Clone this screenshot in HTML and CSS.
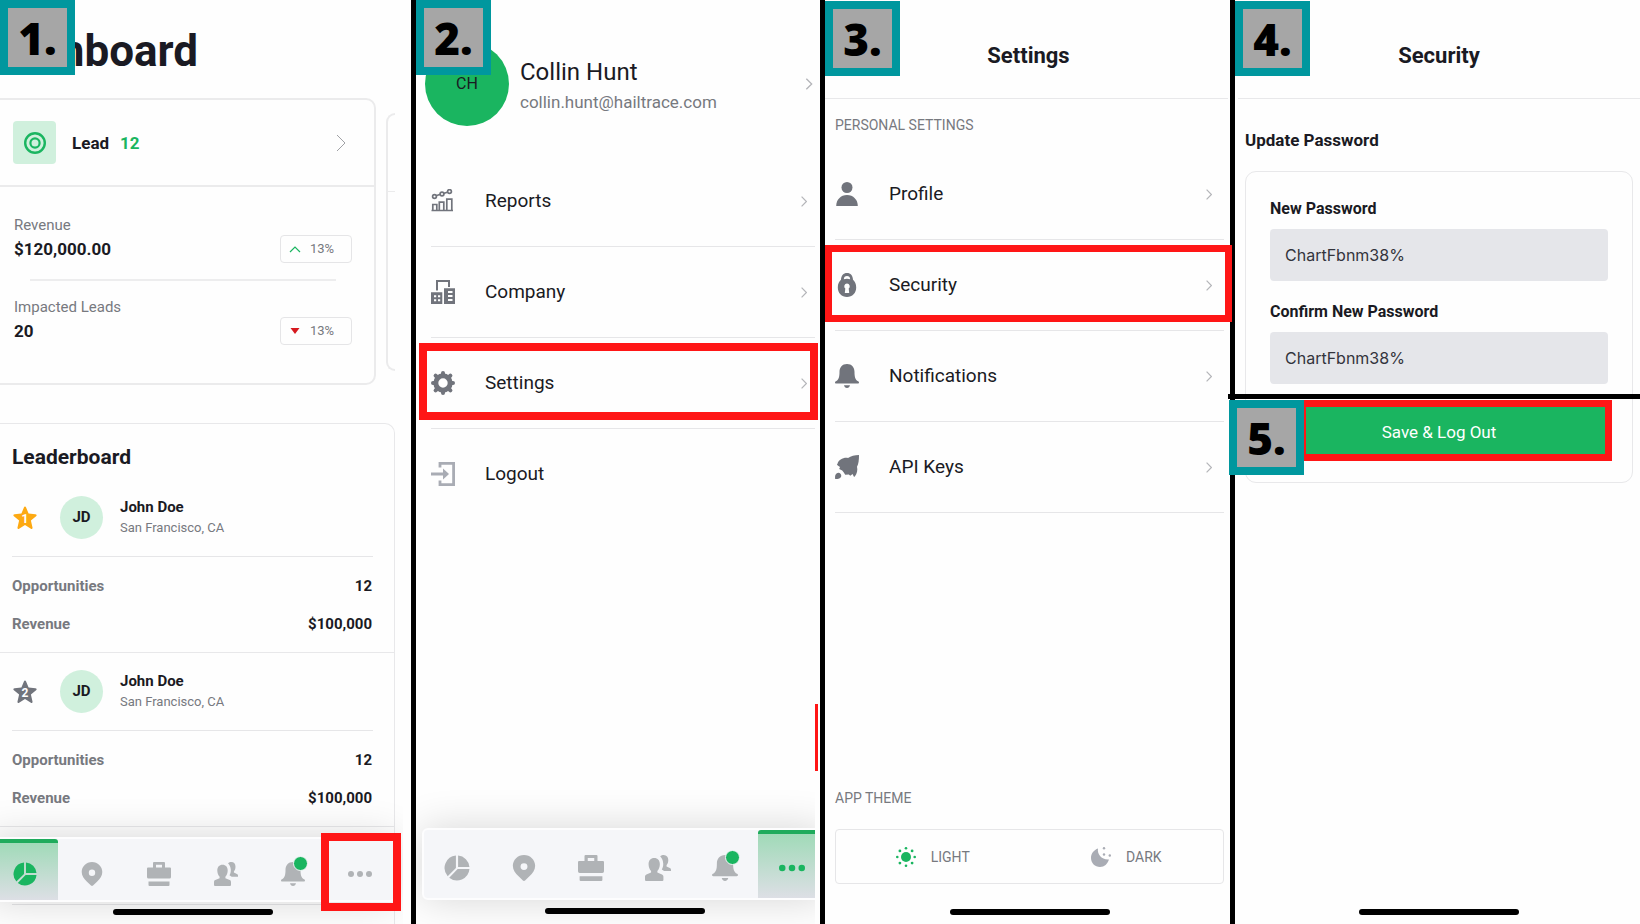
FILE: index.html
```html
<!DOCTYPE html>
<html lang="en">
<head>
    <meta charset="UTF-8">
    <meta name="viewport" content="width=device-width, initial-scale=1.0">
    <title>Change your password</title>
    <link rel="stylesheet" href="styles.css">
</head>
<body>

<!-- Shared icons -->
<svg class="sprite" aria-hidden="true">
    <symbol id="chevron" viewBox="0 0 10 18"><path d="M1 1l8 8-8 8" fill="none" stroke="currentColor"/></symbol>
    <symbol id="pie" viewBox="0 0 24 24">
        <path d="M13 11V.5A11.5 11.5 0 0 1 23.5 11ZM12.6 13H23.5A11.5 11.5 0 0 1 4.8 20.9ZM11 .5V12L3.4 19.5A11.5 11.5 0 0 1 11 .5Z"/>
    </symbol>
    <symbol id="pin" viewBox="0 0 24 24">
        <path fill-rule="evenodd" d="M12 0C6.300 0 1.700 4.500 1.700 10c0 3.900 2.300 7 5.300 9.700l4 3.800c.6.600 1.400.6 2 0l4-3.800c3-2.700 5.300-5.800 5.300-9.700C22.300 4.500 17.700 0 12 0Zm0 7.500a3.200 3.200 0 1 1 0 6.400 3.200 3.200 0 0 1 0-6.400Z"/>
    </symbol>
    <symbol id="case" viewBox="0 0 24 24">
        <path fill-rule="evenodd" d="M7 0h10q1 0 1 1v4.500h5q1 0 1 1V15q0 1.500-1.500 1.500h-21Q0 16.500 0 15V6.500q0-1 1-1h5V1q0-1 1-1Zm2 2.800v2.700h6V2.800ZM1.500 19.500h21V23q0 1-1 1h-19q-1 0-1-1Z"/>
    </symbol>
    <symbol id="people" viewBox="0 0 24 24">
        <path d="M8.500 2.800c-3.300 0-5.200 2.300-5.200 5.700 0 2.600.9 4.800 2.300 6.200v1.500L1.300 18C.4 18.400 0 19.200 0 20.200V23q0 1 1 1h15q1 0 1-1v-2.800c0-1-.4-1.800-1.300-2.200l-4.300-1.800v-1.500c1.400-1.400 2.300-3.600 2.300-6.200 0-3.400-1.900-5.700-5.200-5.700Z"/>
        <path d="M14 1.200C15 .3 16.100 0 17.300 0c2.700 0 4.200 2 4.200 4.700 0 2-.6 3.600-1.600 4.700v1.200l3 1.300c.8.300 1.100.9 1.100 1.600v1.200h-6.300c-1.100-.7-2-1.200-2.200-1.400 1-1.700 1.500-3.600 1.300-5.700-.2-2.700-1.300-4.800-2.800-6.400Z"/>
    </symbol>
    <symbol id="bell" viewBox="0 0 24 24">
        <path d="M12 0C7.200 0 4.500 3.400 4.500 8c0 5-.8 7.800-3.600 9.300-.6.300-.9.700-.9 1.200 0 .6.400 1 1.200 1h21.600c.8 0 1.200-.4 1.200-1 0-.5-.3-.9-.9-1.200C20.300 15.800 19.500 13 19.500 8c0-4.600-2.700-8-7.500-8ZM9 21.300h6c-.3 1.600-1.400 2.700-3 2.700s-2.700-1.100-3-2.700Z"/>
    </symbol>
    <symbol id="dots" viewBox="0 0 24 24"><circle cx="3" cy="12" r="3"/><circle cx="12" cy="12" r="3"/><circle cx="21" cy="12" r="3"/></symbol>
    <symbol id="star" viewBox="0 0 24 24">
        <path d="M12 .6q.7 0 1.100 1l2.500 6 6.800.6q1 .1 1.200.7.200.7-.5 1.300l-5.200 4.300 1.600 6.900q.2.900-.3 1.300t-1.300 0L12 19l-5.900 3.700q-.8.500-1.300 0t-.3-1.300l1.600-6.900L.9 10.200Q.2 9.600.4 8.900q.2-.6 1.200-.7l6.800-.6 2.500-6q.4-1 1.100-1Z"/>
    </symbol>
</svg>

<main class="steps">

    <!-- 1. Dashboard -->
    <section class="panel dashboard">
        <span class="step">1.</span>
        <h1>Dashboard</h1>

        <div class="carousel">
            <article class="card">
                <header class="card-head">
                    <span class="target">
                        <svg viewBox="0 0 22 22" fill="none" stroke="currentColor"><circle cx="11" cy="11" r="9.800" stroke-width="2.400"/><circle cx="11" cy="11" r="4.600" stroke-width="2.200"/></svg>
                    </span>
                    <strong>Lead</strong>
                    <strong class="count">12</strong>
                    <svg class="chevron chevron-lg"><use href="#chevron"/></svg>
                </header>
                <div class="card-body">
                    <div class="metric">
                        <p><span>Revenue</span><strong>$120,000.00</strong></p>
                        <span class="change"><svg class="up" viewBox="0 0 12 12"><path d="M1 9l5-5 5 5" fill="none" stroke="currentColor" stroke-width="1.200"/></svg>13%</span>
                    </div>
                    <hr>
                    <div class="metric">
                        <p><span>Impacted Leads</span><strong>20</strong></p>
                        <span class="change"><svg class="down" viewBox="0 0 12 12"><path d="M1.500 3h9L6 9Z" fill="currentColor"/></svg>13%</span>
                    </div>
                </div>
            </article>
            <div class="next-card"></div>
        </div>

        <div class="leaderboard">
            <h2>Leaderboard</h2>
            <div class="entry">
                <div class="player">
                    <svg class="star gold" viewBox="0 0 24 24"><use href="#star"/><text x="12" y="17">1</text></svg>
                    <span class="avatar">JD</span>
                    <p><strong>John Doe</strong><span>San Francisco, CA</span></p>
                </div>
                <dl>
                    <div><dt>Opportunities</dt><dd>12</dd></div>
                    <div><dt>Revenue</dt><dd>$100,000</dd></div>
                </dl>
            </div>
            <div class="entry">
                <div class="player">
                    <svg class="star" viewBox="0 0 24 24"><use href="#star"/><text x="12" y="17">2</text></svg>
                    <span class="avatar">JD</span>
                    <p><strong>John Doe</strong><span>San Francisco, CA</span></p>
                </div>
                <dl>
                    <div><dt>Opportunities</dt><dd>12</dd></div>
                    <div><dt>Revenue</dt><dd>$100,000</dd></div>
                </dl>
            </div>
            <div class="entry">
                <div class="player"></div>
            </div>
        </div>

        <div class="dock">
            <div class="dock-inner">
                <nav class="tabs">
                    <a href="#" class="active" aria-label="Dashboard"><svg><use href="#pie"/></svg></a>
                    <a href="#" aria-label="Map"><svg><use href="#pin"/></svg></a>
                    <a href="#" aria-label="Jobs"><svg><use href="#case"/></svg></a>
                    <a href="#" aria-label="Contacts"><svg><use href="#people"/></svg></a>
                    <a href="#" class="unread" aria-label="Notifications"><svg><use href="#bell"/></svg></a>
                    <a href="#" class="marked" aria-label="More"><svg><use href="#dots"/></svg></a>
                </nav>
                <div class="home-bar"></div>
            </div>
        </div>
    </section>

    <!-- 2. More menu -->
    <section class="panel more">
        <span class="step">2.</span>
        <a href="#" class="profile">
            <span class="initials">CH</span>
            <span class="who"><b>Collin Hunt</b><span>collin.hunt@hailtrace.com</span></span>
            <svg class="chevron chevron-md"><use href="#chevron"/></svg>
        </a>
        <ul class="menu">
            <li><a href="#">
                <svg viewBox="0 0 24 24" fill="none" stroke="currentColor" stroke-width="1.700"><path d="M.5 21.500h21.500M1.800 21V15.500h4V21M8.300 21V13.200h4.500V21M15.800 21V10.200h5V21M5 6.800l4.500-1.500M12.500 4.500l4.500-1.500"/><circle cx="3.500" cy="7.500" r="1.900"/><circle cx="11" cy="5" r="1.900"/><circle cx="18.500" cy="2.500" r="1.900"/></svg>
                Reports<svg class="chevron"><use href="#chevron"/></svg></a></li>
            <li><a href="#">
                <svg viewBox="0 0 24 24"><path fill-rule="evenodd" d="M5 0h14v7h-2V2H7v8.500H5ZM0 12.300h11.300V24H0Zm3 3v2h2.200v-2Zm4 0v2h2.200v-2Zm-4 4v2h2.200v-2Zm4 0v2h2.200v-2ZM13 8.300h11V24H13Zm4 2.700v2h4.500v-2Zm0 4v2h4.500v-2Zm0 4v2h4.500v-2Z"/></svg>
                Company<svg class="chevron"><use href="#chevron"/></svg></a></li>
            <li class="marked"><a href="#">
                <svg viewBox="0 0 24 24" fill="none" stroke="currentColor"><circle cx="12" cy="12" r="7.200" stroke-width="5"/><path d="M12 3v-1M12 21v1M3 12h-1M21 12h1M5.500 5.500l-.9-.9M18.500 5.500l.9-.9M5.500 18.500l-.9.9M18.500 18.500l.9.9" stroke-width="4" stroke-linecap="round"/></svg>
                Settings<svg class="chevron"><use href="#chevron"/></svg></a></li>
            <li><a href="#">
                <svg class="faded" viewBox="0 0 24 24" fill="none" stroke="currentColor" stroke-width="2.800"><path d="M9 5.500V1.400h13.600v21.200H9v-4.100M0 12h14"/><path d="M12 6.500v11l6-5.500Z" fill="currentColor" stroke="none"/></svg>
                Logout</a></li>
        </ul>
        <div class="stray-line"></div>
        <div class="dock">
            <div class="dock-inner">
                <nav class="tabs">
                    <a href="#" aria-label="Dashboard"><svg><use href="#pie"/></svg></a>
                    <a href="#" aria-label="Map"><svg><use href="#pin"/></svg></a>
                    <a href="#" aria-label="Jobs"><svg><use href="#case"/></svg></a>
                    <a href="#" aria-label="Contacts"><svg><use href="#people"/></svg></a>
                    <a href="#" class="unread" aria-label="Notifications"><svg><use href="#bell"/></svg></a>
                    <a href="#" class="active" aria-label="More"><svg><use href="#dots"/></svg></a>
                </nav>
                <div class="home-bar"></div>
            </div>
        </div>
    </section>

    <!-- 3. Settings -->
    <section class="panel settings">
        <span class="step step-low">3.</span>
        <h2 class="title">Settings</h2>
        <h3>PERSONAL SETTINGS</h3>
        <ul class="menu">
            <li><a href="#">
                <svg viewBox="0 0 24 24"><circle cx="12" cy="5.500" r="5.500"/><path d="M1.200 24c0-6.300 4.500-11 10.800-11s10.800 4.700 10.800 11Z"/></svg>
                Profile<svg class="chevron"><use href="#chevron"/></svg></a></li>
            <li class="marked"><a href="#">
                <svg viewBox="0 0 24 24"><path fill-rule="evenodd" d="M12 0c3.600 0 5.800 2.500 6 6.700C20 8.500 21.200 11 21.200 14.500 21.200 20 17.300 24 12 24s-9.200-4-9.200-9.500C2.800 11 4 8.500 6 6.700 6.200 2.500 8.400 0 12 0Zm0 3C10 3 9 4.200 8.800 6.200q3.200-1 6.400 0C15 4.200 14 3 12 3Zm0 7.500a2.800 2.800 0 0 0-1.700 5L9.800 20h4.400l-.5-4.500a2.800 2.800 0 0 0-1.700-5Z"/></svg>
                Security<svg class="chevron"><use href="#chevron"/></svg></a></li>
            <li><a href="#">
                <svg><use href="#bell"/></svg>
                Notifications<svg class="chevron"><use href="#chevron"/></svg></a></li>
            <li><a href="#">
                <svg viewBox="0 0 24 24"><path d="M24 0c0 5-.4 9-2 11.700.8 3.300.1 7-2.200 9.800-.6.600-1.100.4-1.300-.4l-.9-2-2.300 1.600-1.500-1.300-3.600.4c-.9-1.700-1.800-3-3-4.300L4.200 14l.8-2-2.200-1.500c-.9-.5-1-1.100-.3-1.700C3.500 4.800 8.500 2.200 13 3c3-1.900 6.500-3 11-3Z"/><path d="M.2 24c-.4-2.700 0-4.500 1.300-5.500 1.400-1 3-.8 4 .3s1 2.600.1 3.800c-1 1.200-2.800 1.600-5.400 1.400Z"/></svg>
                API Keys<svg class="chevron"><use href="#chevron"/></svg></a></li>
        </ul>

        <fieldset class="theme">
            <legend>APP THEME</legend>
            <div class="theme-options">
                <input type="radio" name="theme" id="light" checked>
                <label for="light"><svg viewBox="0 0 20 20"><circle cx="10" cy="10" r="5"/><circle cx="10" cy="1.300" r="1.300"/><circle cx="10" cy="18.700" r="1.300"/><circle cx="1.300" cy="10" r="1.300"/><circle cx="18.700" cy="10" r="1.300"/><circle cx="3.900" cy="3.900" r="1.400"/><circle cx="16.100" cy="3.900" r="1.400"/><circle cx="3.900" cy="16.100" r="1.400"/><circle cx="16.100" cy="16.100" r="1.400"/></svg>LIGHT</label>
                <input type="radio" name="theme" id="dark">
                <label for="dark"><svg viewBox="0 0 20 20"><path d="M7 1.500c-1 5.500 3.500 11.500 11 11C16.500 17 13.500 20 9 20c-5 0-9-4-9-9 0-4.500 3-8.200 7-9.500Z"/><circle cx="13" cy="1.300" r="1.200"/><circle cx="13" cy="7.500" r="1.200"/><circle cx="18.800" cy="8.500" r="1.200"/></svg>DARK</label>
            </div>
        </fieldset>
        <div class="home-bar"></div>
    </section>

    <!-- 4 and 5. Security -->
    <section class="panel security">
        <span class="step step-low">4.</span>
        <h2 class="title">Security</h2>
        <h3>Update Password</h3>
        <form class="password-form">
            <label for="newPassword">New Password</label>
            <input type="text" id="newPassword" value="ChartFbnm38%">
            <label for="confirmPassword">Confirm New Password</label>
            <input type="text" id="confirmPassword" value="ChartFbnm38%">
            <div class="submit">
                <button type="button">Save &amp; Log Out</button>
                <span class="step">5.</span>
            </div>
        </form>
        <div class="home-bar"></div>
    </section>

</main>

</body>
</html>
```
FILE: styles.css
```css
* {
    box-sizing: border-box;
}
body {
    margin: 0;
    font-family: Roboto, Arial, sans-serif;
    font-size: 15px;
    line-height: 20px;
    color: #1a1a23;
    background-color: #fefefe;
}
h1, h2, h3, p, ul, dl, dd, fieldset {
    margin: 0;
    padding: 0;
}
a {
    color: inherit;
    text-decoration: none;
}
svg {
    flex: none;
    width: 24px;
    height: 24px;
    fill: currentColor;
}
.sprite {
    position: absolute;
    width: 0;
    height: 0;
}
.steps {
    display: grid;
    grid-template-columns: 416fr 409fr 410fr 405fr;
    min-height: 100vh;
}
.panel {
    position: relative;
    display: flex;
    flex-direction: column;
    min-width: 0;
    border-right: 5px solid #000;
}

/* Step number badges */
.step {
    position: absolute;
    z-index: 3;
    top: 0;
    left: 0;
    width: 75px;
    height: 75px;
    border: 8px solid #00979e;
    background-color: #a6a6a6;
    color: #000;
    font: 800 44px/61px "Open Sans", sans-serif;
    text-align: center;
}
.step-low {
    top: 1px;
}

.chevron {
    width: 6px;
    height: 11px;
    margin-left: auto;
    color: #b4b5b9;
    stroke-width: 2;
}
.chevron-md {
    width: 8px;
    height: 12px;
}
.chevron-lg {
    width: 10px;
    height: 18px;
    color: #a0a1a5;
    stroke-width: 1;
}

/* Dashboard */
h1 {
    margin: 20px 0 16px -15px;
    font-size: 44px;
    line-height: 62px;
}
.carousel {
    display: flex;
    align-items: center;
    gap: 10px;
    margin-left: -10px;
    margin-right: 16px;
}
.card {
    flex: 1;
    border: 2px solid #ebebec;
    border-radius: 10px;
}
.card-head {
    display: flex;
    align-items: center;
    height: 87px;
    padding: 0 28px 0 21px;
    border-bottom: 2px solid #ebebec;
    font-size: 17px;
}
.target {
    display: grid;
    place-items: center;
    width: 43px;
    height: 43px;
    margin-right: 16px;
    border-radius: 4px;
    background-color: #d0f0dd;
    color: #1ab560;
}
.target svg {
    width: 22px;
    height: 22px;
    fill: none;
}
.count {
    margin-left: 11px;
    color: #1ab560;
}
.card-body {
    padding: 28px 22px 38px 22px;
}
.card-body hr {
    margin: 16px;
    border: 0;
    border-top: 2px solid #ededee;
}
.metric {
    display: flex;
    align-items: flex-end;
    justify-content: space-between;
}
.metric p > * {
    display: block;
    color: #77797f;
}
.metric p strong {
    color: #1a1a23;
    font-size: 17px;
    line-height: 28px;
}
.change {
    display: flex;
    align-items: center;
    gap: 9px;
    width: 72px;
    height: 28px;
    padding-left: 8px;
    border: 1px solid #e5e5e7;
    border-radius: 4px;
    color: #77797f;
    font-size: 13px;
}
.change svg {
    width: 12px;
    height: 12px;
}
.up {
    color: #1ab560;
}
.down {
    color: #d6191f;
}
.next-card {
    width: 9px;
    height: 258px;
    border: 2px solid #ebebec;
    border-right: 0;
    border-radius: 10px 0 0 10px;
    background: linear-gradient(#ebebec, #ebebec) 0 76px / 100% 1px no-repeat;
}
.leaderboard {
    flex: 1;
    margin: 38px 16px 0 -10px;
    padding-top: 19px;
    border: 1px solid #e8e8ea;
    border-bottom: 0;
    border-radius: 10px 10px 0 0;
}
.leaderboard h2 {
    margin: 0 0 8px 21px;
    font-size: 21px;
    line-height: 28px;
}
.entry {
    padding: 0 21px;
    border-bottom: 1px solid #e8e8ea;
}
.entry:last-child {
    height: 96px;
    border-bottom: 0;
}
.player {
    display: flex;
    align-items: center;
    height: 78px;
    padding-left: 1px;
    border-bottom: 1px solid #e6e6e8;
}
.star {
    color: #71747c;
}
.star.gold {
    color: #fda912;
}
.star text {
    fill: #fff;
    font-size: 12px;
    font-weight: bold;
    text-anchor: middle;
}
.avatar {
    width: 43px;
    margin: 0 17px 0 23px;
    border-radius: 50%;
    background-color: #d0f0dd;
    font-weight: bold;
    line-height: 43px;
    text-align: center;
}
.player p > * {
    display: block;
}
.player p span {
    color: #77797f;
    font-size: 13px;
    line-height: 22px;
}
.entry dl {
    padding: 10px 1px 9px 0;
}
.entry dl div {
    display: flex;
    justify-content: space-between;
    font-weight: bold;
    line-height: 38px;
}
.entry dt {
    color: #77797f;
}

/* Tab bar laid over the bottom of a phone screen */
.dock {
    position: absolute;
    bottom: 0;
    left: 0;
    right: 8px;
    display: flex;
    flex-direction: column;
    justify-content: flex-end;
    height: 160px;
    overflow: hidden;
    pointer-events: none;
}
.dock-inner {
    margin: 0 7px 0 -11px;
    pointer-events: auto;
}
.tabs {
    display: grid;
    grid-template-columns: repeat(6, 1fr);
    height: 65px;
    border: 2px solid #fdfdfe;
    border-radius: 6px;
    background-color: #f5f6f9;
    box-shadow: 0 0 40px rgba(0, 0, 0, 0.16);
}
.tabs a {
    position: relative;
    display: grid;
    place-items: center;
    padding-top: 8px;
    color: #b0b3b6;
}
.tabs .active {
    padding-top: 4px;
    border-top: 4px solid #1fab5c;
    border-radius: 3px 3px 0 0;
    background: linear-gradient(#a0dab8, #dddfe5);
    color: #1ab560;
}
.unread::after {
    content: "";
    position: absolute;
    top: 17px;
    left: 50%;
    width: 13px;
    height: 13px;
    border: 1px solid #f5f6f9;
    border-radius: 50%;
    background-color: #1ab560;
}
.home-bar {
    width: 160px;
    height: 6px;
    margin: 7px auto 9px;
    border-radius: 3px;
    background-color: #000;
}

/* Red frames round the control to press */
.marked {
    position: relative;
}
.marked::after,
.submit::after {
    content: "";
    position: absolute;
    z-index: 2;
    border: 8px solid #ff1616;
    pointer-events: none;
}
.tabs .marked::after {
    top: -6px;
    bottom: -11px;
    left: -6px;
    right: -7px;
}

/* More menu */
.more {
    padding: 42px 5px 0 15px;
}
.profile {
    display: flex;
    align-items: center;
    margin: 0 2px 30px -6px;
}
.initials {
    width: 84px;
    margin-right: 11px;
    border-radius: 50%;
    background-color: #1ab560;
    font-size: 16px;
    line-height: 84px;
    text-align: center;
}
.who {
    padding-top: 3px;
}
.who > * {
    display: block;
}
.who b {
    margin-bottom: 2px;
    font-size: 24px;
    font-weight: normal;
    line-height: 30px;
}
.who span {
    color: #77797f;
    font-size: 17px;
    line-height: 26px;
}
.menu {
    list-style: none;
}
.menu li {
    height: 91px;
    border-bottom: 1px solid #e6e6e8;
}
.more .menu li:last-child {
    border-color: transparent;
}
.menu a {
    display: flex;
    align-items: center;
    height: 100%;
    padding-right: 8px;
    font-size: 19px;
}
.menu a > svg:first-child {
    margin-right: 30px;
    color: #71747c;
}
.menu a > .faded:first-child {
    color: #a9acb4;
}
.menu [fill="none"] {
    fill: none;
}
.menu .marked::after {
    top: 5px;
    bottom: 8px;
    left: -12px;
    right: -3px;
}
.stray-line {
    position: absolute;
    right: 2px;
    bottom: 153px;
    width: 3px;
    height: 67px;
    background-color: #ff1616;
}
.more .dock {
    right: 5px;
}
.more .dock-inner {
    margin: 0 -12px 0 6px;
}
.more .tabs {
    height: 72px;
}
.more .tabs svg {
    width: 26px;
    height: 26px;
}
.more .unread::after {
    top: 20px;
}
.more .home-bar {
    margin: 8px auto 10px;
}

/* Settings */
.settings {
    padding: 0 6px 0 10px;
}
.title {
    height: 99px;
    margin: 0 -4px 0 -10px;
    padding: 13px 0 0 4px;
    border-bottom: 1px solid #e8e8ea;
    font-size: 22px;
    line-height: 86px;
    text-align: center;
}
.settings h3,
.theme legend {
    padding: 0;
    color: #77797f;
    font-size: 14px;
    font-weight: normal;
}
.settings h3 {
    margin: 16px 0 14px;
}
.settings .menu a {
    padding-right: 12px;
}
.settings .marked::after {
    left: -10px;
    right: -8px;
    border-width: 7px;
}
.theme {
    margin: auto 0 18px;
    border: 0;
}
.theme-options {
    display: grid;
    grid-template-columns: 1fr 1fr;
    height: 55px;
    margin-top: 21px;
    border: 1px solid #e6e6e8;
    border-radius: 4px;
}
.theme input {
    position: absolute;
    opacity: 0;
}
.theme label {
    display: flex;
    align-items: center;
    justify-content: center;
    gap: 15px;
    color: #77797f;
    font-size: 14px;
    cursor: pointer;
}
.theme svg {
    width: 20px;
    height: 20px;
    color: #a9acb4;
}
.theme input:checked + label svg {
    color: #1ab560;
}

/* Security */
.security {
    padding: 0 7px 0 10px;
    border-right: 0;
}
.security .title {
    margin: 0 -7px;
    padding-left: 0;
}
.security h3 {
    margin: 29px 0 19px;
    font-size: 17px;
    line-height: 24px;
}
.password-form {
    padding: 27px 24px 28px;
    border: 1px solid #e8e8ea;
    border-radius: 11px;
}
.password-form label {
    display: block;
    margin-bottom: 10px;
    font-size: 16px;
    font-weight: bold;
}
.password-form input {
    display: block;
    width: 100%;
    height: 52px;
    margin-bottom: 21px;
    padding: 0 15px;
    border: 0;
    border-radius: 4px;
    background-color: #e5e6ea;
    color: #33343c;
    font: 16px Inter, sans-serif;
}
.submit {
    position: relative;
    padding-top: 2px;
}
/* Line that parts step 4 from step 5 */
.submit::before {
    content: "";
    position: absolute;
    top: -11px;
    left: -42px;
    right: -32px;
    height: 5px;
    background-color: #000;
}
.submit button {
    width: 100%;
    height: 47px;
    padding-top: 3px;
    border: 0;
    background-color: #1ab560;
    color: #fff;
    font-family: inherit;
    font-size: 17px;
    cursor: pointer;
}
.submit::after {
    top: -5px;
    bottom: -7px;
    left: 29px;
    right: -4px;
    border-width: 7px;
}
.submit .step {
    top: -5px;
    left: -41px;
}
.security .home-bar {
    margin-top: auto;
}
```
